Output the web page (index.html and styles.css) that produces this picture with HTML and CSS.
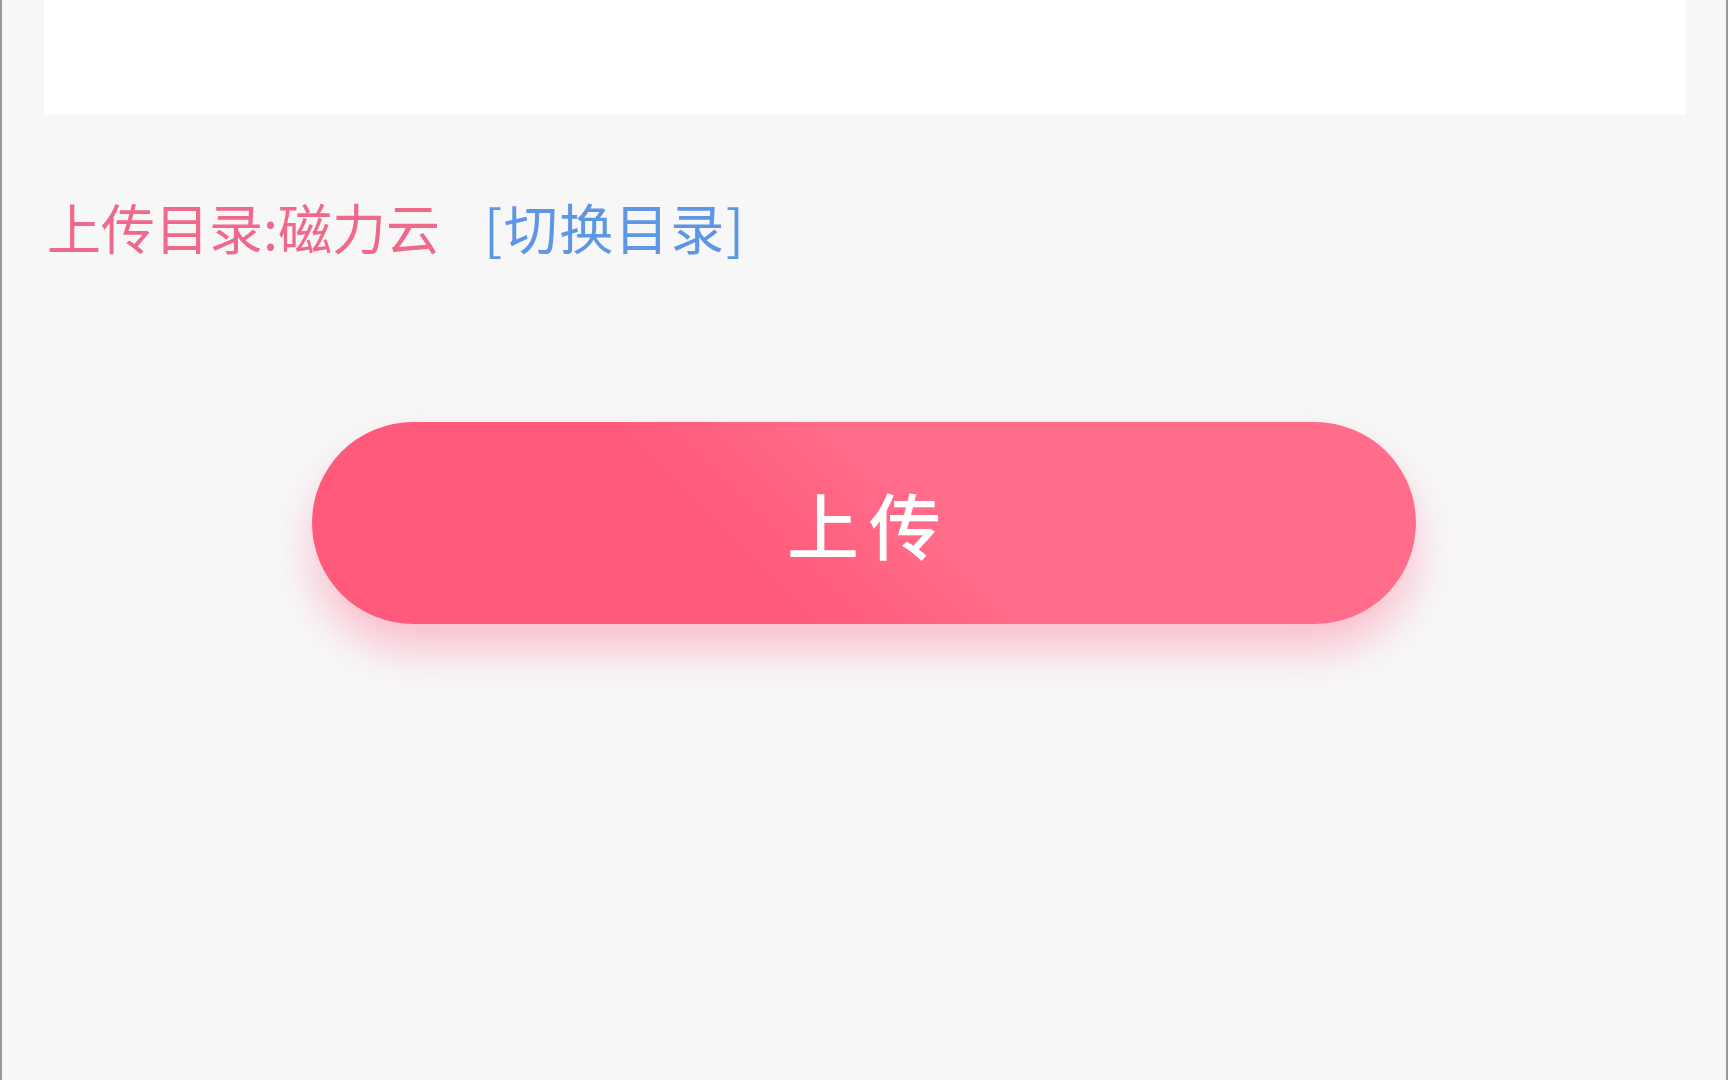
FILE: index.html
```html
<!DOCTYPE html>
<html lang="zh-CN">
<head>
<meta charset="utf-8">
<title>上传</title>
<link rel="stylesheet" href="styles.css">
</head>
<body>
<div class="page">
  <div class="card"></div>
  <div class="dir-line">
    <span class="dir-label">上传目录:磁力云</span>
    <span class="dir-switch">[切换目录]</span>
  </div>
  <div class="btn-wrap">
    <button class="upload-btn">上传</button>
  </div>
</div>
</body>
</html>
```
FILE: styles.css
```css
html, body {
  margin: 0;
  padding: 0;
  background: #f7f7f8;
}
body {
  font-family: "Noto Sans CJK SC", "Noto Sans", sans-serif;
}
.page {
  box-sizing: border-box;
  width: 1728px;
  height: 1080px;
  border-left: 2px solid #9a9a9a;
  border-right: 2px solid #9a9a9a;
  background: #f7f7f8;
  display: flex;
  flex-direction: column;
  overflow: hidden;
}
.card {
  height: 115px;
  margin: 0 40px 0 42px;
  background: #ffffff;
}
.dir-line {
  margin: 72px 0 0 45px;
  height: 80px;
  line-height: 80px;
  font-size: 54px;
  display: flex;
  gap: 44px;
  white-space: nowrap;
}
.dir-label {
  color: #f0698a;
}
.dir-switch {
  color: #5d97e4;
  letter-spacing: 1.5px;
}
.btn-wrap {
  margin-top: 155px;
  display: flex;
  justify-content: center;
}
.upload-btn {
  width: 1104px;
  height: 202px;
  border: none;
  border-radius: 101px;
  background: linear-gradient(45deg, #ff5a7b 38%, #ff6d8a 56%);
  box-shadow: 0 26px 40px rgba(255, 105, 140, 0.38);
  color: #ffffff;
  font-family: "Noto Sans CJK SC", "Noto Sans", sans-serif;
  font-size: 72px;
  font-weight: 500;
  letter-spacing: 10px;
  text-indent: 10px;
  padding: 0;
  line-height: 1;
}
```
